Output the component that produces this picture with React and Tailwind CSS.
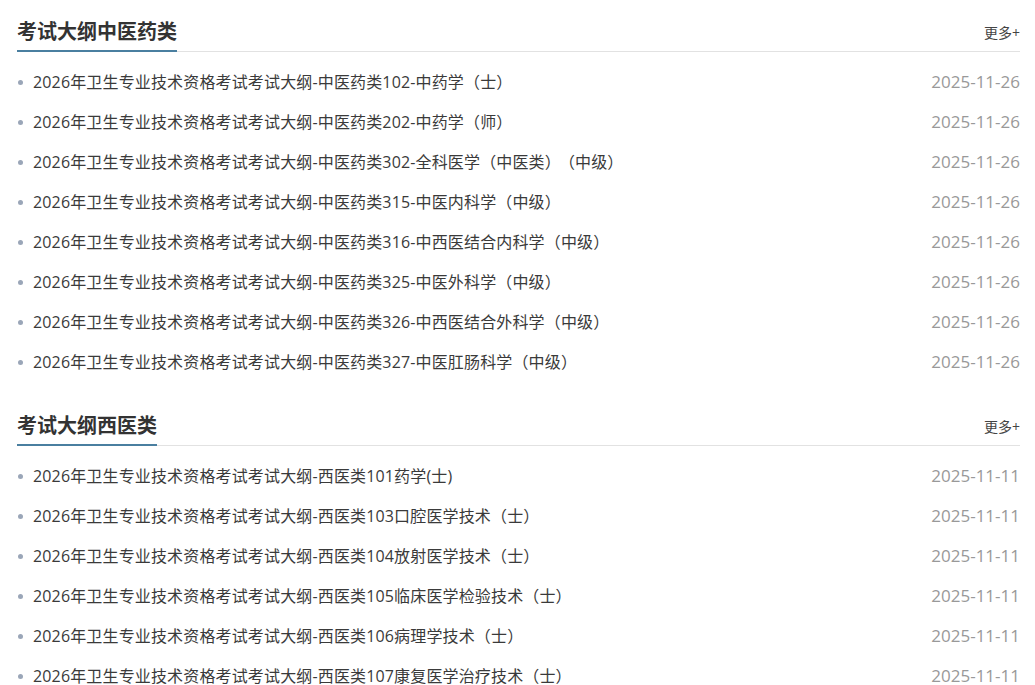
import React from 'react';

const tcm = [
  '2026年卫生专业技术资格考试考试大纲-中医药类102-中药学（士）',
  '2026年卫生专业技术资格考试考试大纲-中医药类202-中药学（师）',
  '2026年卫生专业技术资格考试考试大纲-中医药类302-全科医学（中医类）|（中级）',
  '2026年卫生专业技术资格考试考试大纲-中医药类315-中医内科学（中级）',
  '2026年卫生专业技术资格考试考试大纲-中医药类316-中西医结合内科学（中级）',
  '2026年卫生专业技术资格考试考试大纲-中医药类325-中医外科学（中级）',
  '2026年卫生专业技术资格考试考试大纲-中医药类326-中西医结合外科学（中级）',
  '2026年卫生专业技术资格考试考试大纲-中医药类327-中医肛肠科学（中级）',
];

const wm = [
  '2026年卫生专业技术资格考试考试大纲-西医类101药学(士)',
  '2026年卫生专业技术资格考试考试大纲-西医类103口腔医学技术（士）',
  '2026年卫生专业技术资格考试考试大纲-西医类104放射医学技术（士）',
  '2026年卫生专业技术资格考试考试大纲-西医类105临床医学检验技术（士）',
  '2026年卫生专业技术资格考试考试大纲-西医类106病理学技术（士）',
  '2026年卫生专业技术资格考试考试大纲-西医类107康复医学治疗技术（士）',
];

function Section({ title, items, date }) {
  return (
    <section>
      <div className="flex items-end justify-between border-b border-[#e2e2e2] pt-[17px]">
        <h2
          className="-mb-px border-b-2 border-[#4a7fa0] pb-[5px] text-[20px] font-bold leading-[28px] text-[#333]"
          style={{ fontFamily: '"Noto Sans CJK SC", sans-serif' }}
        >
          {title}
        </h2>
        <a className="mb-[9px] text-[14px] leading-[18px] text-[#444]">更多+</a>
      </div>
      <ul className="pt-[10px]">
        {items.map((t) => {
          const [a, b] = t.split('|');
          return (
            <li key={t} className="flex h-10 items-center justify-between">
              <span className="flex items-center">
                <span className="ml-[1px] mr-[10px] h-[5px] w-[5px] rounded-full bg-[#9aa6b8]" />
                <span className="text-[16px] tracking-[0.15px] text-[#3a3a3a]">
                  {a}
                  {b && <span className="ml-[6px]">{b}</span>}
                </span>
              </span>
              <span className="text-[17px] text-[#999]">{date}</span>
            </li>
          );
        })}
      </ul>
    </section>
  );
}

export default function App() {
  return (
    <div
      className="min-h-screen bg-white pl-[17px] pr-[15px]"
      style={{ fontFamily: '"Open Sans", "Noto Sans CJK SC", sans-serif' }}
    >
      <Section title="考试大纲中医药类" items={tcm} date="2025-11-26" />
      <div className="h-[12px]" />
      <Section title="考试大纲西医类" items={wm} date="2025-11-11" />
    </div>
  );
}
